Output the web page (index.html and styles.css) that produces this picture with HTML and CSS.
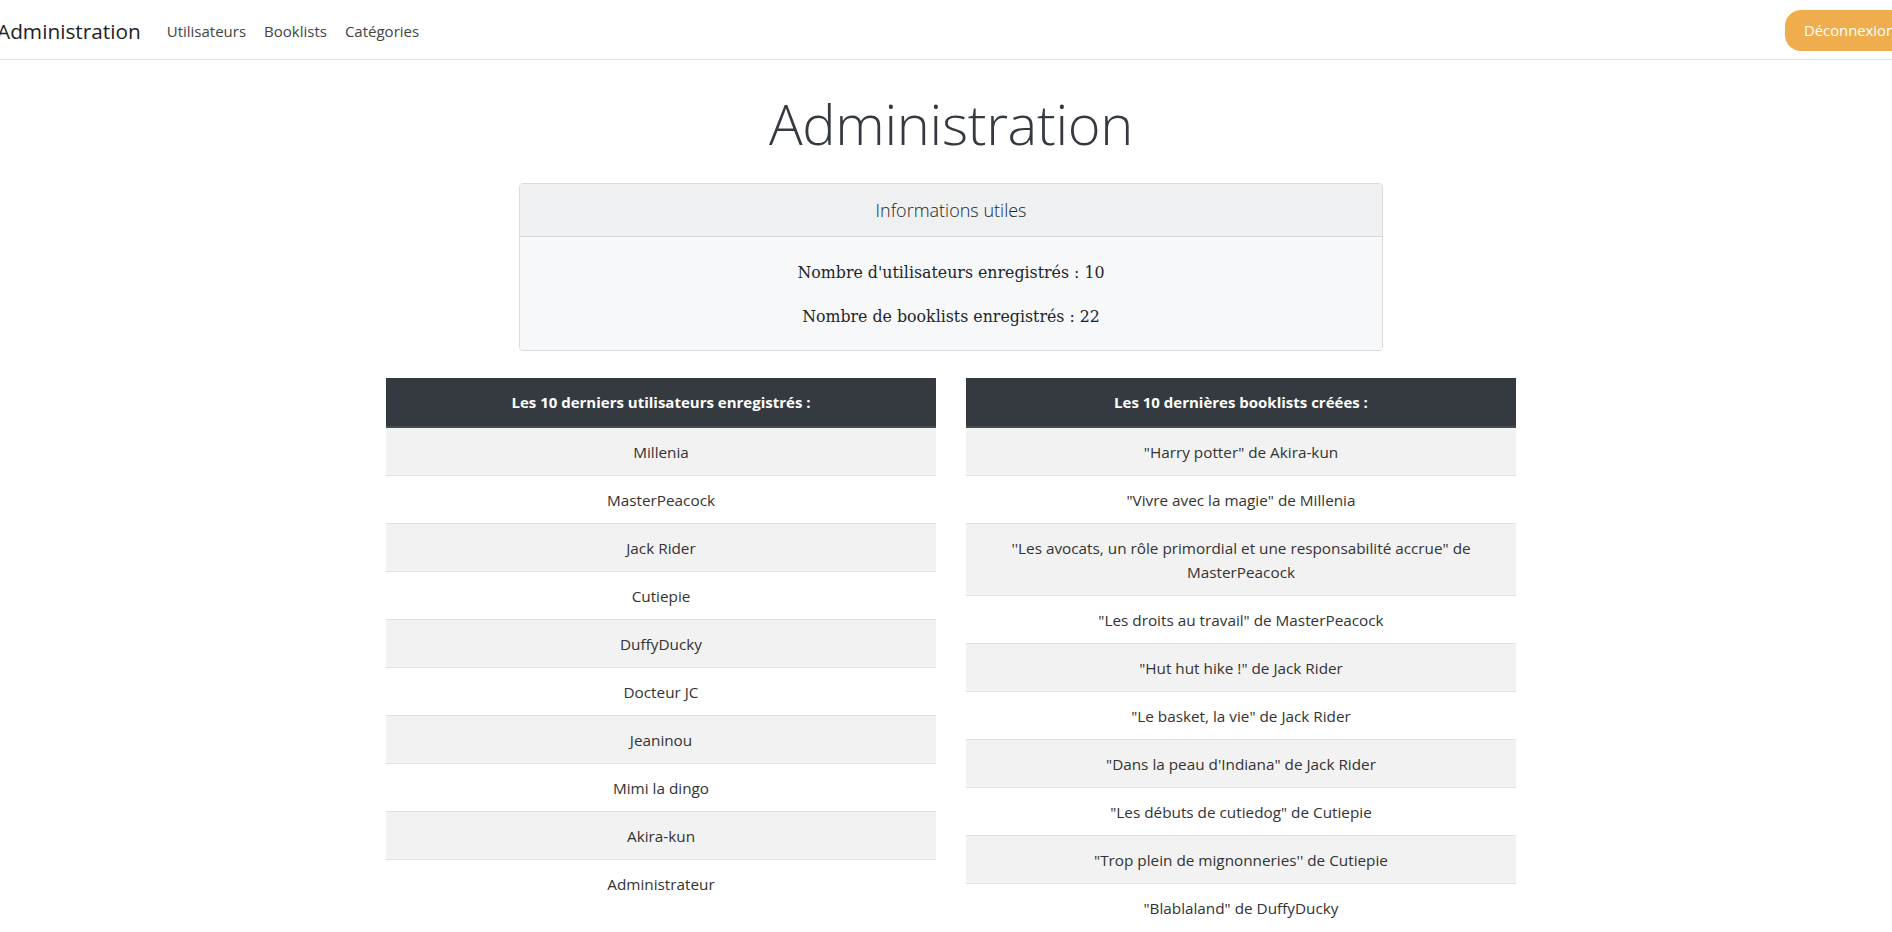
FILE: index.html
```html
<!DOCTYPE html>
<html lang="fr">
<head>
<meta charset="utf-8">
<title>Administration</title>
<link rel="stylesheet" href="styles.css">
</head>
<body>
<nav class="navbar">
  <a class="brand" href="#">Administration</a>
  <ul class="nav-links">
    <li><a href="#">Utilisateurs</a></li>
    <li><a href="#">Booklists</a></li>
    <li><a href="#">Catégories</a></li>
  </ul>
  <button class="btn-logout" type="button">Déconnexion</button>
</nav>
<main class="main">
  <h1 class="title">Administration</h1>
  <section class="card">
    <div class="card-header">Informations utiles</div>
    <div class="card-body">
      <p>Nombre d'utilisateurs enregistrés : 10</p>
      <p>Nombre de booklists enregistrés : 22</p>
    </div>
  </section>
  <div class="tables">
    <table class="list">
      <thead><tr><th>Les 10 derniers utilisateurs enregistrés :</th></tr></thead>
      <tbody>
        <tr><td>Millenia</td></tr>
        <tr><td>MasterPeacock</td></tr>
        <tr><td>Jack Rider</td></tr>
        <tr><td>Cutiepie</td></tr>
        <tr><td>DuffyDucky</td></tr>
        <tr><td>Docteur JC</td></tr>
        <tr><td>Jeaninou</td></tr>
        <tr><td>Mimi la dingo</td></tr>
        <tr><td>Akira-kun</td></tr>
        <tr><td>Administrateur</td></tr>
      </tbody>
    </table>
    <table class="list">
      <thead><tr><th>Les 10 dernières booklists créées :</th></tr></thead>
      <tbody>
        <tr><td>"Harry potter" de Akira-kun</td></tr>
        <tr><td>"Vivre avec la magie" de Millenia</td></tr>
        <tr><td>''Les avocats, un rôle primordial et une responsabilité accrue" de MasterPeacock</td></tr>
        <tr><td>"Les droits au travail" de MasterPeacock</td></tr>
        <tr><td>"Hut hut hike !" de Jack Rider</td></tr>
        <tr><td>"Le basket, la vie" de Jack Rider</td></tr>
        <tr><td>"Dans la peau d'Indiana" de Jack Rider</td></tr>
        <tr><td>"Les débuts de cutiedog" de Cutiepie</td></tr>
        <tr><td>"Trop plein de mignonneries'' de Cutiepie</td></tr>
        <tr><td>"Blablaland" de DuffyDucky</td></tr>
      </tbody>
    </table>
  </div>
</main>
</body>
</html>
```
FILE: styles.css
```css
html, body {
  margin: 0;
  padding: 0;
  overflow: hidden;
  background: #fff;
}
body {
  font-family: "Open Sans", "Noto Sans", sans-serif;
  font-size: 15px;
  line-height: 24px;
  color: #212529;
}
.navbar {
  display: flex;
  align-items: center;
  height: 59px;
  border-bottom: 1px solid #e3e3e3;
  padding: 0;
}
.brand {
  margin-left: -3px;
  margin-right: 17px;
  margin-top: 2px;
  font-size: 20.8px;
  color: #222;
  text-decoration: none;
  line-height: 30px;
}
.nav-links {
  display: flex;
  list-style: none;
  margin: 2px 0 0;
  padding: 0;
  gap: 0;
}
.nav-links a {
  display: block;
  padding: 0 9px;
  font-size: 15px;
  color: #444;
  text-decoration: none;
}
.btn-logout {
  margin-left: auto;
  margin-right: -22px;
  height: 41px;
  padding: 0 19px;
  border: none;
  border-radius: 16px;
  background: #f0ad4e;
  color: #fff;
  font-family: "Open Sans", "Noto Sans", sans-serif;
  font-size: 14.8px;
  margin-top: 1px;
}
.main {
  display: flex;
  flex-direction: column;
  align-items: center;
  padding-left: 10px;
}
.title {
  margin: 30px 0 0;
  font-size: 56px;
  line-height: 67px;
  font-weight: 300;
  letter-spacing: -0.3px;
  color: #343a40;
}
.card {
  margin-top: 26px;
  width: 862px;
  border: 1px solid #d9dbde;
  border-radius: 4px;
  overflow: hidden;
  text-align: center;
}
.card-header {
  height: 52px;
  line-height: 52px;
  background: #eff0f2;
  border-bottom: 1px solid #d6d8db;
  font-size: 18px;
  font-weight: 300;
  color: #212529;
}
.card-body {
  background: #f7f8fa;
  padding: 24px 0 21px;
  font-family: "DejaVu Serif", Georgia, serif;
  font-size: 15.8px;
  color: #212529;
}
.card-body p {
  margin: 0;
  line-height: 24px;
}
.card-body p + p {
  margin-top: 20px;
}
.tables {
  margin-top: 27px;
  display: grid;
  grid-template-columns: 550px 550px;
  gap: 30px;
  align-items: start;
}
.list {
  width: 100%;
  border-collapse: collapse;
  text-align: center;
}
.list th {
  height: 48px;
  padding: 0 12px;
  background: #343a40;
  border-bottom: 2px solid #454d55;
  color: #fff;
  font-size: 15px;
  font-weight: 700;
}
.list td {
  padding: 11.5px 12px;
  border-top: 1px solid #dee2e6;
  color: #333;
  font-size: 15.3px;
  line-height: 24px;
}
.list tbody tr:nth-child(odd) td {
  background: #f2f2f2;
}
```
